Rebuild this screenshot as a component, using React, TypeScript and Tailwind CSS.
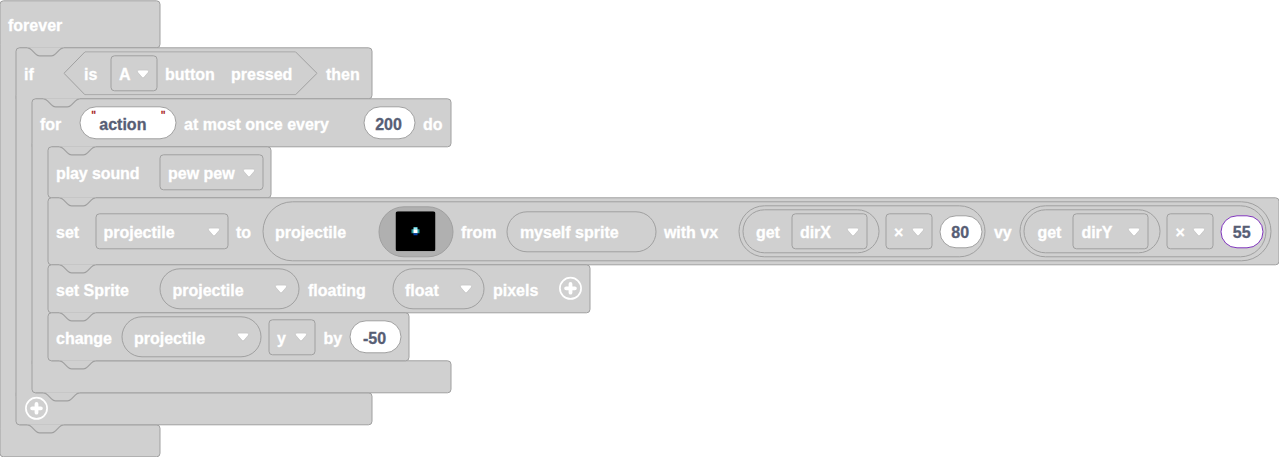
import type { ReactNode } from "react";

const Notch = ({ className = "left-[11px]" }: { className?: string }) => (
  <svg className={`absolute -top-px z-30 h-[10px] w-9 ${className}`} viewBox="0 0 36 10" fill="none">
    <path
      d="M0 0H36V0.5C34 0.5 33 1.5 32 2.5L28 6.5C27 7.5 26 8.5 24 8.5H12C10 8.5 9 7.5 8 6.5L4 2.5C3 1.5 2 .5 0 .5Z"
      fill="#d0d0d0"
      stroke="#d0d0d0"
      strokeWidth=".8"
    />
    <path
      d="M0 .5C2 .5 3 1.5 4 2.5L8 6.5C9 7.5 10 8.5 12 8.5H24C26 8.5 27 7.5 28 6.5L32 2.5C33 1.5 34 .5 36 .5"
      stroke="#a0a0a0"
      strokeWidth="1.2"
    />
  </svg>
);

const Caret = () => (
  <svg className="relative top-[.5px] h-[10px] w-[13px] shrink-0" viewBox="0 0 13 10">
    <path
      d="M2.3 .8H10.7C12.2 .8 12.5 2.2 11.6 3.2L7.7 7.8C7 8.6 6 8.6 5.3 7.8L1.4 3.2C.5 2.2 .8 .8 2.3 .8Z"
      fill="#fff"
      stroke="#bcbcbc"
      strokeWidth=".6"
    />
  </svg>
);

const Plus = ({ className }: { className: string }) => (
  <svg className={`relative left-[.5px] h-6 w-6 shrink-0 ${className}`} viewBox="0 0 24 24" fill="none">
    <circle cx="12" cy="12" r="10.6" stroke="#fff" strokeWidth="1.7" />
    <path d="M12 7.6V16.4M7.6 12H16.4" stroke="#fff" strokeWidth="3.8" strokeLinecap="round" />
  </svg>
);

const Label = ({ w, children }: { w: string; children: ReactNode }) => (
  <span className={`relative top-[2.1px] left-[.5px] shrink-0 whitespace-nowrap ${w}`}>{children}</span>
);

const Block = ({ className, children }: { className: string; children: ReactNode }) => (
  <div
    className={`relative -mb-px flex shrink-0 items-center rounded-[4px] border border-[#a0a0a0] bg-[#d0d0d0] pl-[7px] ${className}`}
  >
    <Notch />
    {children}
  </div>
);

const Select = ({ className, children }: { className: string; children: ReactNode }) => (
  <div
    className={`flex h-9 shrink-0 items-center justify-between rounded-[4px] border border-[#a0a0a0] pr-[7px] pl-[7.5px] ${className}`}
  >
    <span className="relative top-[2.1px]">{children}</span>
    <Caret />
  </div>
);

const Pill = ({ className, children }: { className: string; children: ReactNode }) => (
  <div className={`flex shrink-0 items-center rounded-full border ${className}`}>{children}</div>
);

const NumberInput = ({ className, children }: { className: string; children: ReactNode }) => (
  <Pill className={`h-[33px] justify-center bg-white pr-[1.5px] text-[#575e75] ${className}`}>
    <span className="relative top-[2.1px]">{children}</span>
  </Pill>
);

const Loop = ({
  head,
  headClass,
  footClass,
  foot,
  notched = true,
  children,
}: {
  head: ReactNode;
  headClass: string;
  footClass: string;
  foot?: ReactNode;
  notched?: boolean;
  children: ReactNode;
}) => (
  <div className="flex flex-col items-start">
    <div
      className={`relative flex items-center rounded-[4px] rounded-bl-none border border-[#a0a0a0] bg-[#d0d0d0] pl-[7px] ${headClass}`}
    >
      {notched && <Notch />}
      {head}
    </div>
    <div className="-mt-px flex">
      <div className="relative z-10 -mt-[3px] -mr-1 -mb-1 w-5 shrink-0 border-l border-[#a0a0a0] bg-[#d0d0d0]" />
      <div className="relative z-20 flex flex-col items-start">{children}</div>
    </div>
    <div
      className={`relative flex h-[33px] items-center rounded-[4px] rounded-tl-none border border-[#a0a0a0] bg-[#d0d0d0] ${footClass}`}
    >
      <Notch className="left-[27px]" />
      {foot}
    </div>
  </div>
);

const Product = ({
  axis,
  value,
  className,
  inputClass,
}: {
  axis: string;
  value: string;
  className: string;
  inputClass: string;
}) => (
  <Pill className={`h-[52px] w-[247px] border-[#a0a0a0] pl-[3px] ${className}`}>
    <Pill className="mr-[6px] h-[44px] w-[137px] border-[#a0a0a0] pl-[12px]">
      <Label w="w-[36px]">get</Label>
      <Select className="w-[76px]">{axis}</Select>
    </Pill>
    <Select className="mr-[7px] w-[47px]">×</Select>
    <NumberInput className={`w-[43px] ${inputClass}`}>{value}</NumberInput>
  </Pill>
);

const Projectile = () => (
  <svg className="h-10 w-10" viewBox="0 0 40 40">
    <rect width="40" height="40" rx="2.5" fill="#000" />
    <path d="M16 18H24V22H16Z" fill="#249ca3" />
    <path d="M18 16H22V18H18Z" fill="#87f2ff" />
    <path d="M18 18H22V22H18Z" fill="#fff" />
    <path d="M18 22H22V24H18Z" fill="#003fad" />
  </svg>
);

const Quote = ({ className }: { className: string }) => (
  <span
    className={`relative self-start pt-[3px] text-[12px] leading-[12px] font-normal text-[#a31515] ${className}`}
  >
    "
  </span>
);

export default function App() {
  return (
    <div className="h-[457px] w-[1279px] overflow-hidden bg-white">
      <main className="w-[1280px] [transform:translate(-0.5px,0.3px)] font-['Liberation_Sans',Arial,sans-serif] text-[16px] leading-[18px] font-bold text-white [-webkit-text-stroke:0.3px_currentColor]">
        <Loop notched={false} headClass="h-12 w-[161px]" footClass="w-[161px]" head={<Label w="w-[80px]">forever</Label>}>
          <Loop
            headClass="h-[52px] w-[357px]"
            footClass="-mb-px w-[357px] pl-[7px]"
            foot={<Plus className="-top-[.5px]" />}
            head={
              <>
                <Label w="w-[40px]">if</Label>
                <div className="relative mr-[8px] flex h-[44px] w-[254px] shrink-0 items-center pl-[20px]">
                  <svg className="absolute inset-0 h-[44px] w-[254px]" viewBox="0 0 254 44" fill="none">
                    <path d="M21.5 .5H232L253.5 22L232 43.5H21.5L.5 22Z" stroke="#a0a0a0" />
                  </svg>
                  <Label w="w-[27px]">is</Label>
                  <Select className="mr-[7px] w-[47px]">A</Select>
                  <Label w="w-[66px]">button</Label>
                  <Label w="w-[66px]">pressed</Label>
                </div>
                <Label w="w-[40px]">then</Label>
              </>
            }
          >
            <Loop
              headClass="h-[49px] w-[420px]"
              footClass="-mb-px w-[420px]"
              head={
                <>
                  <Label w="w-[40px]">for</Label>
                  <Pill className="mr-[7.5px] h-[33px] w-[96.5px] border-[#a0a0a0] bg-white pl-[11px] text-[#575e75]">
                    <Quote className="w-[7px]" />
                    <span className="relative top-[2.1px] left-[.8px] w-[62px]">action</span>
                    <Quote className="left-[.5px]" />
                  </Pill>
                  <Label w="w-[180px]">at most once every</Label>
                  <NumberInput className="mr-[7.5px] w-[51.5px] border-[#a0a0a0]">200</NumberInput>
                  <Label w="w-[20px]">do</Label>
                </>
              }
            >
              <Block className="h-[52px] w-[224px]">
                <Label w="w-[104px] tracking-[-0.1px]">play sound</Label>
                <Select className="w-[104px]">pew pew</Select>
              </Block>
              <Block className="h-[68px] w-[1231.5px]">
                <Label w="w-[39.5px]">set</Label>
                <Select className="mr-[7px] w-[133.4px]">projectile</Select>
                <Label w="w-[27px]">to</Label>
                <Pill className="h-[60px] w-[1009px] border-[#a0a0a0] pl-[11px]">
                  <Label w="w-[104px]">projectile</Label>
                  <Pill className="mr-[7px] h-[51px] w-[75px] justify-center border-[#a0a0a0] bg-[#b0b0b0]">
                    <Projectile />
                  </Pill>
                  <Label w="w-[46px]">from</Label>
                  <Pill className="mr-[7px] h-[41px] w-[150px] border-[#a0a0a0] pl-[12px]">
                    <Label w="w-[120px]">myself sprite</Label>
                  </Pill>
                  <Label w="w-[75px]">with vx</Label>
                  <Product axis="dirX" value="80" className="mr-[8px]" inputClass="border-[#a0a0a0]" />
                  <Label w="w-[26.5px]">vy</Label>
                  <Product axis="dirY" value="55" className="" inputClass="border-[#8035bd]" />
                </Pill>
              </Block>
              <Block className="h-[49px] w-[543px]">
                <Label w="w-[104px]">set Sprite</Label>
                <Pill className="mr-[8px] h-[41px] w-[140px] justify-between border-[#a0a0a0] pr-[11px] pl-[11.5px]">
                  <Label w="">projectile</Label>
                  <Caret />
                </Pill>
                <Label w="w-[84.5px]">floating</Label>
                <Pill className="mr-[8px] h-[41px] w-[92.5px] justify-between border-[#a0a0a0] pr-[11px] pl-[11.5px]">
                  <Label w="">float</Label>
                  <Caret />
                </Pill>
                <Label w="w-[65px]">pixels</Label>
                <Plus className="-top-[.5px]" />
              </Block>
              <Block className="h-[49px] w-[362px]">
                <Label w="w-[65.5px]">change</Label>
                <Pill className="mr-[7px] h-[41px] w-[140.5px] justify-between border-[#a0a0a0] pr-[11px] pl-[11.5px]">
                  <Label w="">projectile</Label>
                  <Caret />
                </Pill>
                <Select className="mr-[7.5px] w-[47px]">y</Select>
                <Label w="w-[26.5px]">by</Label>
                <NumberInput className="w-[51.5px] border-[#a0a0a0]">-50</NumberInput>
              </Block>
            </Loop>
          </Loop>
        </Loop>
      </main>
    </div>
  );
}
